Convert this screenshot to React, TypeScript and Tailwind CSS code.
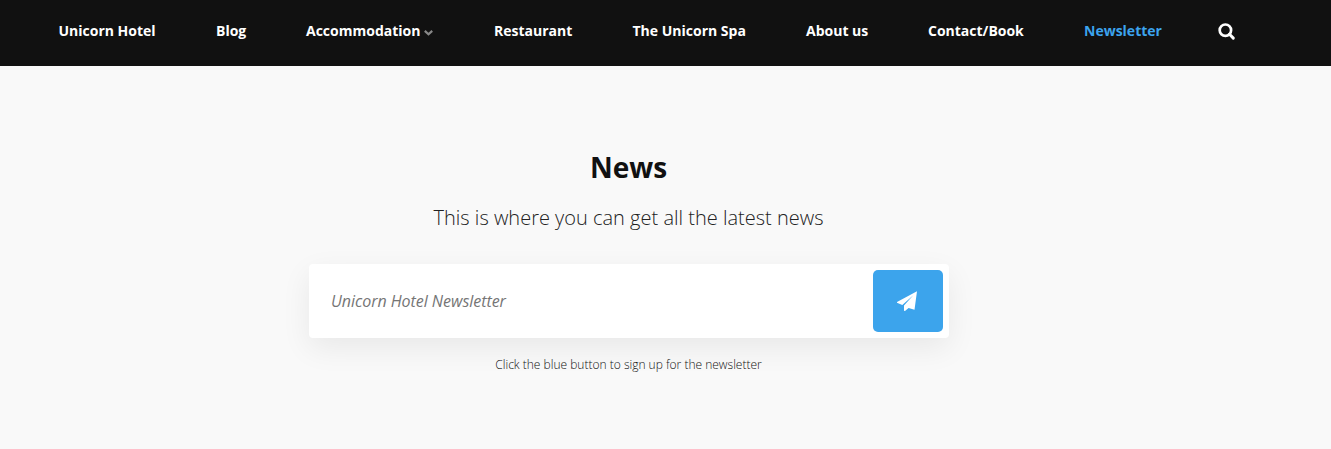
import React from "react";

function NavItem({ label, className }: { label: string; className: string }) {
  return <a className={`shrink-0 whitespace-nowrap ${className}`}>{label}</a>;
}

function ChevronIcon() {
  return (
    <svg viewBox="0 0 9 6" className="mt-[3px] h-1.5 w-[9px]" fill="none" stroke="#888" strokeWidth="2.2">
      <path d="M0.8 0.9L4.5 4.3L8.2 0.9" />
    </svg>
  );
}

function SearchIcon() {
  return (
    <svg viewBox="0 0 18 18" className="mt-0.5 size-[18px]" fill="none" stroke="currentColor">
      <circle cx="7.4" cy="7.2" r="5.7" strokeWidth="2.7" />
      <path d="M11.5 11.3L15.3 15.1" strokeWidth="3" strokeLinecap="round" />
    </svg>
  );
}

function PlaneIcon() {
  return (
    <svg viewBox="0 0 20 20" className="-ml-0.5 size-5" fill="currentColor">
      <path d="M20 0.3L17.5 18.8L11.6 17L8 20L7 19.7V14.6L16.3 4.2L5.3 13.9L0 11.7V10.9Z" />
    </svg>
  );
}

export default function App() {
  return (
    <div className="h-[449px] w-full overflow-hidden bg-[#f9f9f9] font-['Open_Sans',sans-serif] text-[#111]">
      <nav className="flex h-[66px] items-center bg-[#111] pb-1 pl-[58.5px] text-sm font-bold text-white">
        <NavItem label="Unicorn Hotel" className="w-[157.5px]" />
        <NavItem label="Blog" className="w-[90px]" />
        <a className="flex w-[188px] shrink-0 items-center gap-1">
          Accommodation
          <ChevronIcon />
        </a>
        <NavItem label="Restaurant" className="w-[138.5px]" />
        <NavItem label="The Unicorn Spa" className="w-[173.5px]" />
        <NavItem label="About us" className="w-[122px]" />
        <NavItem label="Contact/Book" className="w-[156px]" />
        <NavItem label="Newsletter" className="w-[134px] text-[#3ca4ee]" />
        <SearchIcon />
      </nav>
      <main className="ml-[309px] flex w-[640px] flex-col items-center pt-20">
        <h1 className="pr-px text-[28px] leading-[42px] font-bold">News</h1>
        <p className="mt-[15px] pr-px text-xl leading-[30px] font-light text-[#222]">This is where you can get all the latest news</p>
        <form className="mt-[31px] flex h-[74px] w-full items-center rounded bg-white p-1.5 pl-[22px] shadow-[0_10px_30px_rgba(0,0,0,0.07)]">
          <input className="min-w-0 flex-1 text-base tracking-[-0.04px] italic outline-none placeholder:text-[#757575]" placeholder="Unicorn Hotel Newsletter" />
          <button type="button" aria-label="Sign up" className="flex h-[62px] w-[70px] items-center justify-center rounded-[5px] bg-[#3ca4ec] text-white">
            <PlaneIcon />
          </button>
        </form>
        <p className="mt-[18px] pr-px text-xs leading-[18px] font-light">Click the blue button to sign up for the newsletter</p>
      </main>
    </div>
  );
}
